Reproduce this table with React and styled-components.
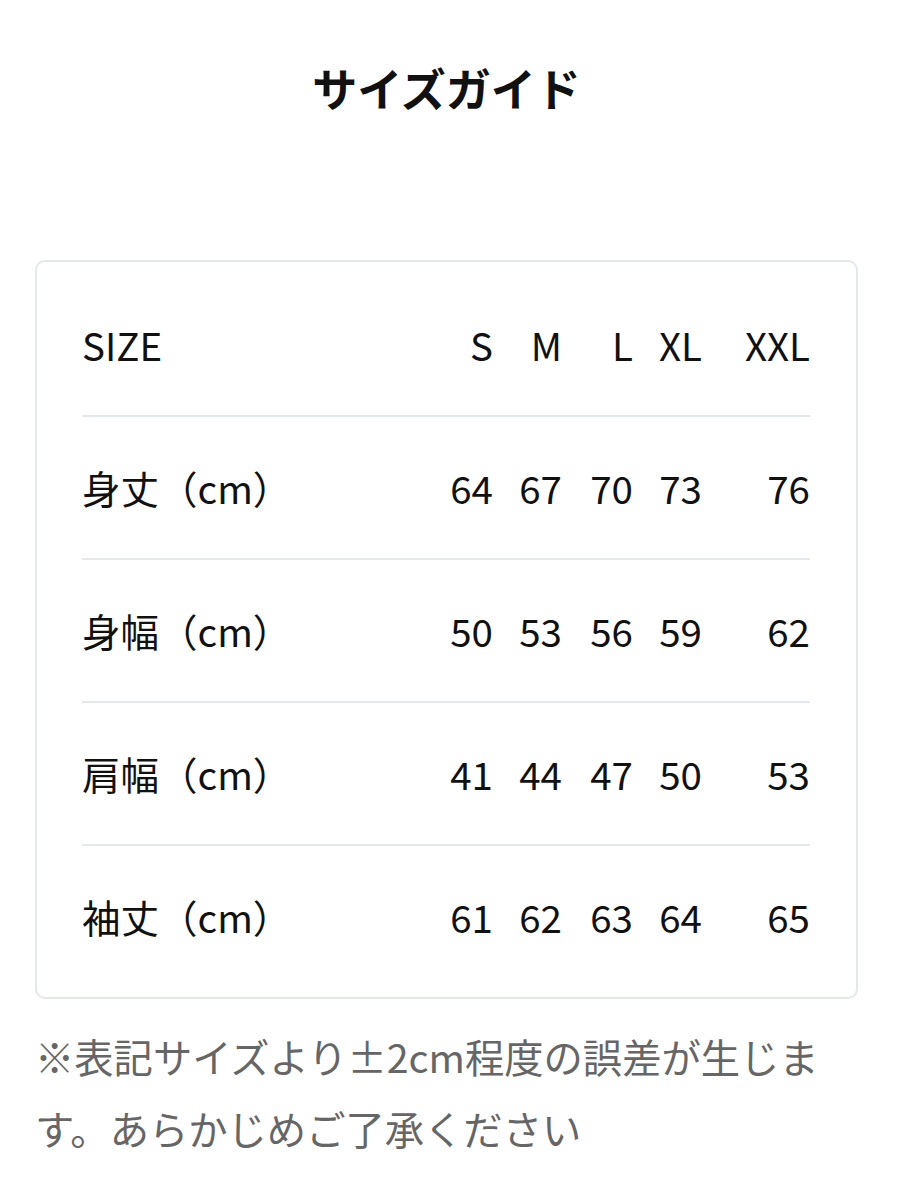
import React from 'react'
import styled, { createGlobalStyle } from 'styled-components'

const sizes = ['S', 'M', 'L', 'XL', 'XXL']

const rows = [
  { label: '身丈（cm）', values: [64, 67, 70, 73, 76] },
  { label: '身幅（cm）', values: [50, 53, 56, 59, 62] },
  { label: '肩幅（cm）', values: [41, 44, 47, 50, 53] },
  { label: '袖丈（cm）', values: [61, 62, 63, 64, 65] },
]

const GlobalStyle = createGlobalStyle`
  body {
    margin: 0;
    background: #ffffff;
    font-family: "Noto Sans CJK JP", "Noto Sans", sans-serif;
    color: #111111;
  }
`

const Page = styled.div`
  padding: 55px 42px 0 35px;
`

const Title = styled.h1`
  margin: 0;
  font-size: 45px;
  line-height: 66px;
  font-weight: 700;
  text-align: center;
  color: #111111;
`

const Card = styled.div`
  margin-top: 139px;
  border: 2px solid #e3e8ef;
  border-radius: 10px;
  padding: 12px 46px 10px 45px;
`

const Row = styled.div`
  display: grid;
  grid-template-columns: 1fr 70px 69px 71px 69px 108px;
  align-items: center;
  height: 141px;
  border-bottom: 2px solid #e3e8ef;

  &:last-child {
    border-bottom: none;
  }
`

const Label = styled.div`
  font-size: 38.5px;
  line-height: 1;
  white-space: nowrap;
`

const Cell = styled.div`
  font-size: 38.5px;
  line-height: 1;
  text-align: right;
`

const Note = styled.p`
  margin: 21px 0 0;
  font-size: 39.3px;
  line-height: 72px;
  color: #666666;
`

export default function App() {
  return (
    <>
      <GlobalStyle />
      <Page>
        <Title>サイズガイド</Title>
        <Card>
          <Row>
            <Label>SIZE</Label>
            {sizes.map((s) => (
              <Cell key={s}>{s}</Cell>
            ))}
          </Row>
          {rows.map((r) => (
            <Row key={r.label}>
              <Label>{r.label}</Label>
              {r.values.map((v, i) => (
                <Cell key={i}>{v}</Cell>
              ))}
            </Row>
          ))}
        </Card>
        <Note>※表記サイズより±2cm程度の誤差が生じます。あらかじめご了承ください</Note>
      </Page>
    </>
  )
}
